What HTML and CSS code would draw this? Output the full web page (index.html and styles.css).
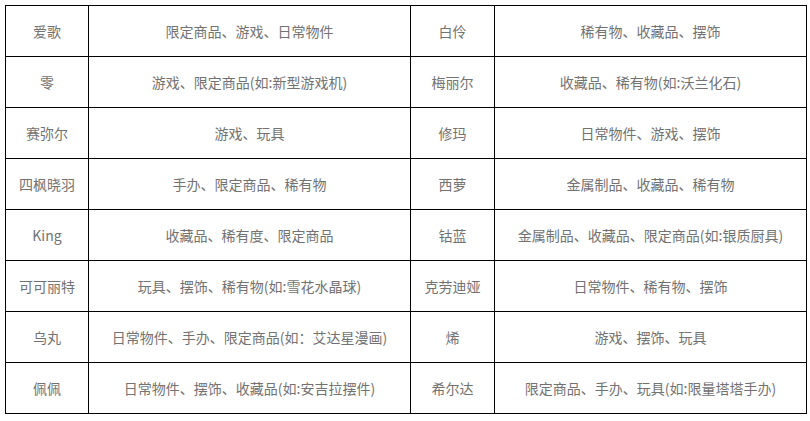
FILE: index.html
```html
<!DOCTYPE html>
<html lang="zh">
<head>
<meta charset="utf-8">
<link rel="stylesheet" href="styles.css">
</head>
<body>
<table class="gifts">
<colgroup>
<col class="c-name"><col class="c-like"><col class="c-name2"><col class="c-like2">
</colgroup>
<tbody>
<tr><td>爱歌</td><td>限定商品、游戏、日常物件</td><td>白伶</td><td>稀有物、收藏品、摆饰</td></tr>
<tr><td>零</td><td>游戏、限定商品(如:新型游戏机)</td><td>梅丽尔</td><td>收藏品、稀有物(如:沃兰化石)</td></tr>
<tr><td>赛弥尔</td><td>游戏、玩具</td><td>修玛</td><td>日常物件、游戏、摆饰</td></tr>
<tr><td>四枫晓羽</td><td>手办、限定商品、稀有物</td><td>西萝</td><td>金属制品、收藏品、稀有物</td></tr>
<tr><td>King</td><td>收藏品、稀有度、限定商品</td><td>钴蓝</td><td>金属制品、收藏品、限定商品(如:银质厨具)</td></tr>
<tr><td>可可丽特</td><td>玩具、摆饰、稀有物(如:雪花水晶球)</td><td>克劳迪娅</td><td>日常物件、稀有物、摆饰</td></tr>
<tr><td>乌丸</td><td>日常物件、手办、限定商品(如：艾达星漫画)</td><td>烯</td><td>游戏、摆饰、玩具</td></tr>
<tr><td>佩佩</td><td>日常物件、摆饰、收藏品(如:安吉拉摆件)</td><td>希尔达</td><td>限定商品、手办、玩具(如:限量塔塔手办)</td></tr>
</tbody>
</table>
</body>
</html>
```

FILE: styles.css
```css
html, body {
  margin: 0;
  padding: 0;
  background: #ffffff;
}
body {
  padding: 5px 0 0 5px;
  font-family: "Noto Sans CJK SC", "Noto Sans", sans-serif;
}
.gifts {
  border-collapse: collapse;
  table-layout: fixed;
  width: 801px;
}
.c-name { width: 83px; }
.c-like { width: 322px; }
.c-name2 { width: 84px; }
.c-like2 { width: 312px; }
.gifts td {
  border: 1px solid #000000;
  height: 50px;
  padding: 0;
  text-align: center;
  vertical-align: middle;
  font-size: 14px;
  color: #727272;
  line-height: 20px;
  white-space: nowrap;
}
```
